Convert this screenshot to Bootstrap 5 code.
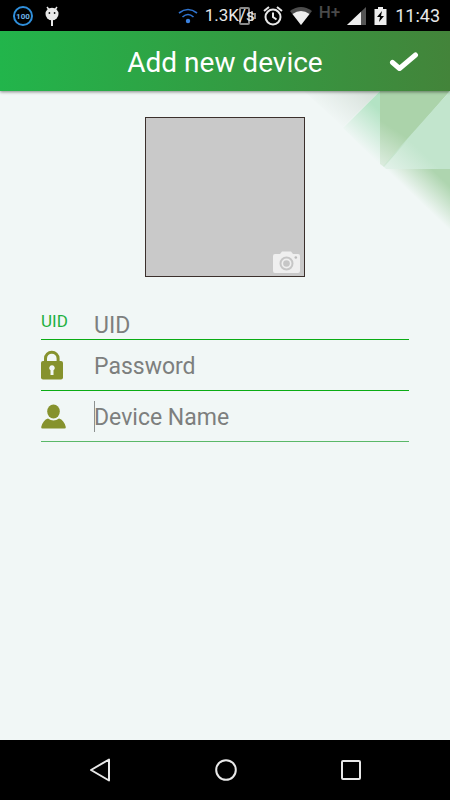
<!DOCTYPE html>
<html lang="en">
<head>
<meta charset="utf-8">
<meta name="viewport" content="width=device-width, initial-scale=1">
<title>Add new device</title>
<link href="https://cdn.jsdelivr.net/npm/bootstrap@5.3.0/dist/css/bootstrap.min.css" rel="stylesheet">
<style>
  body { font-family: Roboto, "Liberation Sans", sans-serif; background: #f1f7f6; }
  svg { display: block; flex: none; }
  .status-bar { height: 31px; background: #000; color: #e8e8e8; font-size: 18px; line-height: 31px; padding: 0 10px 0 12px; }
  .status-start { gap: 10px; }
  .status-end { gap: 7px; }
  .net-speed { font-size: 17px; padding-right: 2px; z-index: 1; }
  .vibrate-icon { margin-left: -28px; }
  .net-type { font-size: 17px; line-height: 24px; color: #4a4a4a; font-weight: 500; }
  .title-bar { height: 60px; background: linear-gradient(90deg, #22b54b, #43843a); box-shadow: 0 1px 3px rgba(0,0,0,.45); z-index: 1; }
  .title-bar h1 { font-size: 28px; line-height: 34px; color: #fff; font-weight: 400; padding-top: 4px; }
  .side-slot { width: 92px; }
  .corner-art { top: 0; right: 0; }
  .content-area { padding: 26px 41px 0; }
  .photo-btn { width: 160px; height: 160px; background: #c9c9c9; border: 1px solid #3b302c; padding: 0 4px 3px 0; }
  .device-form { margin-top: 32px; }
  .field-row { height: 51px; border-bottom: 1px solid #0aac14; }
  .field-row.first { height: 31px; }
  .field-row.last { border-color: #5ab868; }
  .field-icon { width: 53px; }
  .uid-label { font-size: 17px; line-height: 24px; color: #1fb141; }
  .field-input { font-size: 23px; line-height: 30px; color: #444; min-width: 0; outline: 0; margin-top: 4px; }
  .field-input::placeholder { color: #7d7f7e; opacity: 1; }
  .text-cursor { width: 1px; height: 31px; background: #8d9190; margin-right: -1px; }
  .nav-keys { height: 60px; background: #000; padding: 0 37px; }
</style>
</head>
<body class="d-flex flex-column min-vh-100">
  <div class="status-bar d-flex align-items-center justify-content-between">
    <div class="status-start d-flex align-items-center">
      <svg width="22" height="22" viewBox="0 0 22 22" role="img" aria-label="Battery 100"><circle cx="11" cy="11" r="9" fill="none" stroke="#2f8fdc" stroke-width="2"/><text x="11" y="14" text-anchor="middle" font-size="8" font-weight="700" fill="#6fb4e6">100</text></svg>
      <svg width="18" height="22" viewBox="0 0 18 22" aria-hidden="true"><path d="M3 2l3 4M13 2l-3 4" stroke="#e8e8e8" stroke-width="1.500"/><ellipse cx="8" cy="9" rx="6.500" ry="6.300" fill="#e8e8e8"/><path d="M8 15v6" stroke="#e8e8e8" stroke-width="2"/><circle cx="5.400" cy="8" r=".9" fill="#111"/><circle cx="10.600" cy="8" r=".9" fill="#111"/></svg>
    </div>
    <div class="status-end d-flex align-items-center">
      <svg width="20" height="16" viewBox="0 0 20 16" aria-hidden="true"><g fill="none" stroke="#2f74d0" stroke-width="1.600"><path d="M1 5Q10-2 19 5M4.500 9Q10 4 15.500 9"/></g><circle cx="10" cy="13" r="2.200" fill="#3b82e0"/></svg>
      <span class="net-speed">1.3K/s</span>
      <svg class="vibrate-icon" width="20" height="18" viewBox="0 0 20 18" aria-hidden="true"><g fill="none" stroke="#8a8a8a" stroke-width="2"><rect x="4" y="1" width="9" height="16" rx="1"/><path d="M16 4v10M19 6v6"/></g></svg>
      <svg width="20" height="20" viewBox="0 0 20 20" aria-hidden="true"><g fill="none" stroke="#e8e8e8" stroke-width="2"><circle cx="10" cy="11" r="7.500"/><path d="M1 5l5-4M19 5l-5-4M10 6.500V11l3.500 2.500"/></g></svg>
      <svg width="22" height="18" viewBox="0 0 22 18" aria-hidden="true"><path d="M0 4Q11-4 22 4L11 18z" fill="#4d4d4d"/><path d="M2.500 7Q11 1 19.500 7L11 18z" fill="#eee"/></svg>
      <span class="net-type align-self-start">H+</span>
      <svg width="19" height="18" viewBox="0 0 19 18" aria-hidden="true"><path d="M0 18L19 0v18z" fill="#555"/><path d="M0 18L14 4.700V18z" fill="#eee"/></svg>
      <svg width="15" height="18" viewBox="0 0 15 18" aria-hidden="true"><path d="M5 0h5v2h3.500v16h-12V2H5z" fill="#eee"/><path d="M9 4L4 10h3l-1 5 5-6H8z" fill="#000"/></svg>
      <span>11:43</span>
    </div>
  </div>

  <header class="title-bar d-flex align-items-center position-relative">
    <span class="side-slot"></span>
    <h1 class="flex-fill text-center mb-0">Add new device</h1>
    <span class="side-slot d-flex justify-content-center">
      <button type="button" class="btn p-0 border-0" aria-label="Save"><svg width="30" height="22" viewBox="0 0 30 22"><path d="M3.500 12.500l7 6L26.500 5" fill="none" stroke="#fff" stroke-width="5" stroke-linecap="round" stroke-linejoin="round"/></svg></button>
    </span>
  </header>

  <main class="content-area flex-fill position-relative">
    <svg class="corner-art position-absolute" width="150" height="150" viewBox="0 0 150 150" aria-hidden="true">
      <defs>
        <linearGradient id="fadeGrey" gradientUnits="userSpaceOnUse" x1="42" y1="37" x2="70" y2="3"><stop stop-color="#d9e3dd" stop-opacity="0"/><stop offset="1" stop-color="#d8e2dc"/></linearGradient>
        <linearGradient id="fadeMint" gradientUnits="userSpaceOnUse" x1="57" y1="53" x2="84" y2="23"><stop stop-color="#b3e3c4" stop-opacity="0"/><stop offset="1" stop-color="#b3e3c4"/></linearGradient>
        <linearGradient id="fadeLeaf" gradientUnits="userSpaceOnUse" x1="80" y1="73" x2="100" y2="42"><stop stop-color="#abd3aa" stop-opacity=".3"/><stop offset="1" stop-color="#abd3aa"/></linearGradient>
        <linearGradient id="fadePale" gradientUnits="userSpaceOnUse" x1="85" y1="77" x2="110" y2="50"><stop stop-color="#c2e5cd" stop-opacity=".3"/><stop offset="1" stop-color="#c2e5cd"/></linearGradient>
        <linearGradient id="fadeLow" gradientUnits="userSpaceOnUse" x1="116" y1="107" x2="138" y2="84"><stop stop-color="#aed5af" stop-opacity="0"/><stop offset="1" stop-color="#aed5af"/></linearGradient>
      </defs>
      <path d="M4 0H80L43 36z" fill="url(#fadeGrey)"/>
      <path d="M80 0V74L43 37z" fill="url(#fadeMint)"/>
      <path d="M80 0H150L84 76 80 73z" fill="url(#fadeLeaf)"/>
      <path d="M150 0V78H86L83 75z" fill="url(#fadePale)"/>
      <path d="M86 78H150V139z" fill="url(#fadeLow)"/>
    </svg>
    <button type="button" class="photo-btn d-flex align-items-end justify-content-end mx-auto position-relative" aria-label="Choose photo">
      <svg width="27" height="22" viewBox="0 0 27 22"><path d="M2 3H7L9 0.500H18L20 3H25Q27 3 27 5V20Q27 22 25 22H2Q0 22 0 20V5Q0 3 2 3z" fill="#efefef"/><circle cx="13.500" cy="12.500" r="6" fill="none" stroke="#c6c6c6" stroke-width="2"/><circle cx="13.500" cy="12.500" r="3.300" fill="#c6c6c6"/><circle cx="22.800" cy="6.500" r="1.300" fill="#bbb"/></svg>
    </button>

    <form class="device-form">
      <div class="field-row first d-flex align-items-center">
        <label for="uid" class="field-icon uid-label align-self-start">UID</label>
        <input id="uid" type="text" class="field-input flex-fill border-0 bg-transparent p-0" placeholder="UID">
      </div>
      <div class="field-row d-flex align-items-center">
        <label for="password" class="field-icon" aria-label="Password"><svg width="22" height="30" viewBox="0 0 22 30"><path d="M4.500 13V8.500a6.300 6.300 0 0 1 12.600 0V13" fill="none" stroke="#86922d" stroke-width="3"/><rect y="11" width="22" height="18.500" rx="2" fill="#86922d"/><path d="M11 15.300a2.700 2.700 0 0 1 1.500 5V25h-3v-4.700a2.700 2.700 0 0 1 1.500-5z" fill="#f1f7f6"/></svg></label>
        <input id="password" type="password" class="field-input flex-fill border-0 bg-transparent p-0" placeholder="Password">
      </div>
      <div class="field-row last d-flex align-items-center">
        <label for="deviceName" class="field-icon" aria-label="Device Name"><svg width="25" height="25" viewBox="0 0 25 25"><ellipse cx="12.500" cy="7.500" rx="6.300" ry="7" fill="#86922d"/><path d="M7 14.500Q12.500 18.500 18 14.500Q23 16 24.800 23Q25 24.500 23.500 24.500H1.500Q0 24.500.2 23Q2 16 7 14.500z" fill="#86922d"/></svg></label>
        <span class="text-cursor"></span>
        <input id="deviceName" type="text" class="field-input flex-fill border-0 bg-transparent p-0" placeholder="Device Name">
      </div>
    </form>
  </main>

  <nav class="nav-keys d-flex align-items-center justify-content-around" aria-label="System">
    <button type="button" class="btn p-0 border-0" aria-label="Back"><svg width="22" height="24" viewBox="0 0 22 24"><path d="M20 1.500v21L2 12z" fill="none" stroke="#e8e8e8" stroke-width="2" stroke-linejoin="round"/></svg></button>
    <button type="button" class="btn p-0 border-0" aria-label="Home"><svg width="22" height="22" viewBox="0 0 22 22"><circle cx="11" cy="11" r="9.800" fill="none" stroke="#e8e8e8" stroke-width="2"/></svg></button>
    <button type="button" class="btn p-0 border-0" aria-label="Recent apps"><svg width="20" height="20" viewBox="0 0 20 20"><rect x="1" y="1" width="18" height="18" rx="1" fill="none" stroke="#e8e8e8" stroke-width="2"/></svg></button>
  </nav>
  <script src="https://cdn.jsdelivr.net/npm/bootstrap@5.3.0/dist/js/bootstrap.bundle.min.js"></script>
</body>
</html>
